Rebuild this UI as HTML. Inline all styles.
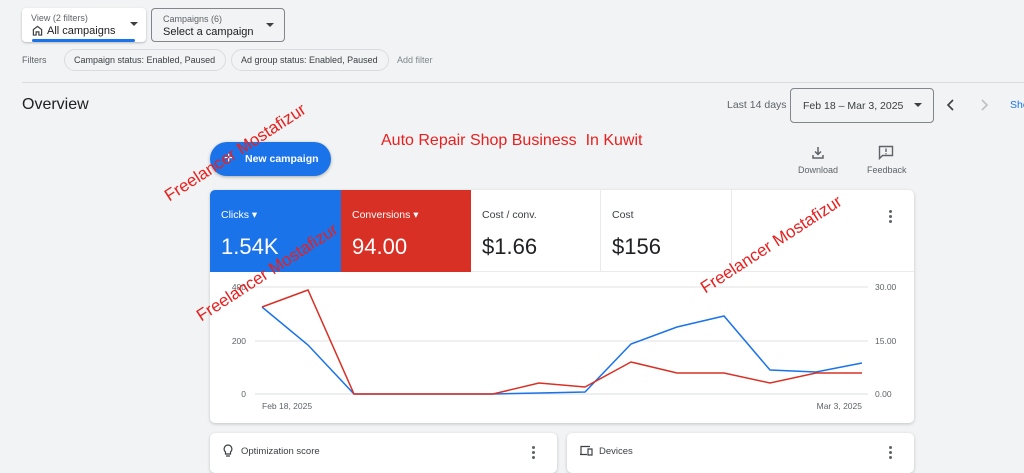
<!DOCTYPE html>
<html><head><meta charset="utf-8"><style>
body{margin:0;width:1024px;height:469px;background:#f1f3f4;font-family:"Liberation Sans",sans-serif;position:relative;overflow:hidden;color:#3c4043}
.abs{position:absolute;white-space:nowrap}
.sel{position:absolute;border-radius:4px;box-sizing:border-box}
.small{font-size:9px;color:#5f6368}
.chip{position:absolute;top:49px;height:22px;border:1px solid #dadce0;border-radius:12px;font-size:9px;color:#3c4043;line-height:20px;padding:0 9px;box-sizing:border-box;white-space:nowrap;overflow:hidden}
.wm{position:absolute;color:#e8201f;font-size:17px;transform-origin:left bottom;white-space:nowrap}
.tile{position:absolute;top:190px;height:82px;width:131px;box-sizing:border-box;padding:19px 0 0 11px}
.tile .l{font-size:10.5px}
.tile .v{font-size:22px;margin-top:13px}
.dots{position:absolute;width:3px}
.dots i{display:block;width:3px;height:3px;border-radius:50%;background:#5f6368;margin-bottom:2px}
</style></head><body>
<div class="sel" style="left:22px;top:8px;width:124px;height:34px;background:#fff;box-shadow:0 1px 2px rgba(0,0,0,.25)">
 <div class="small abs" style="left:9px;top:5px">View (2 filters)</div>
 <svg class="abs" style="left:10px;top:17px" width="11" height="11" viewBox="0 0 12 12"><path d="M1.5 11V5L6 1.5 10.5 5V11H7.5V7.5h-3V11Z" fill="none" stroke="#3c4043" stroke-width="1.3"/></svg>
 <div class="abs" style="left:25px;top:17px;font-size:11px;color:#202124">All campaigns</div>
 <div class="abs" style="left:108px;top:14px;border:4px solid transparent;border-top-color:#3c4043"></div>
 <div class="abs" style="left:10px;top:31px;width:103px;height:3px;background:#1a73e8;border-radius:2px"></div>
</div>
<div class="sel" style="left:151px;top:8px;width:134px;height:34px;border:1px solid #80868b">
 <div class="small abs" style="left:11px;top:5px">Campaigns (6)</div>
 <div class="abs" style="left:11px;top:17px;font-size:11px;color:#202124">Select a campaign</div>
 <div class="abs" style="left:114px;top:14px;border:4px solid transparent;border-top-color:#3c4043"></div>
</div>
<div class="small abs" style="left:22px;top:55px">Filters</div>
<div class="chip" style="left:64px;width:162px">Campaign status: Enabled, Paused</div>
<div class="chip" style="left:231px;width:158px">Ad group status: Enabled, Paused</div>
<div class="small abs" style="left:397px;top:55px;color:#80868b">Add filter</div>
<div class="abs" style="left:22px;top:82px;width:1002px;height:1px;background:#dadce0"></div>
<div class="abs" style="left:22px;top:96px;font-size:16px;color:#202124">Overview</div>
<div class="abs" style="left:727px;top:99px;font-size:10.5px;color:#5f6368">Last 14 days</div>
<div class="sel" style="left:790px;top:88px;width:144px;height:35px;border:1px solid #80868b">
 <div class="abs" style="left:12px;top:11px;font-size:10.5px;color:#3c4043">Feb 18 – Mar 3, 2025</div>
 <div class="abs" style="left:123px;top:14px;border:4px solid transparent;border-top-color:#3c4043"></div>
</div>
<svg class="abs" style="left:945px;top:98px" width="12" height="14"><path d="M8 2 3 7l5 5" fill="none" stroke="#3c4043" stroke-width="1.6"/></svg>
<svg class="abs" style="left:978px;top:98px" width="12" height="14"><path d="M4 2l5 5-5 5" fill="none" stroke="#bdc1c6" stroke-width="1.6"/></svg>
<div class="abs" style="left:1010px;top:99px;font-size:10.5px;color:#1a73e8">Show</div>
<div class="abs" style="left:210px;top:142px;width:121px;height:34px;background:#1a73e8;border-radius:17px;box-shadow:0 1px 3px rgba(0,0,0,.3);color:#fff;font-size:10.5px;font-weight:bold;line-height:34px"><span style="position:absolute;left:14px;font-size:16px;font-weight:normal">+</span><span style="position:absolute;left:35px">New campaign</span></div>
<svg class="abs" style="left:811px;top:146px" width="14" height="14" viewBox="0 0 14 14"><path d="M7 1v7M4 5.5 7 8.5 10 5.5M2 9v3h10V9" fill="none" stroke="#5f6368" stroke-width="1.5"/></svg>
<div class="small abs" style="left:798px;top:165px;font-size:9px;color:#5f6368">Download</div>
<svg class="abs" style="left:878px;top:145px" width="16" height="15" viewBox="0 0 16 15"><path d="M1.5 1.5h13v9h-10l-3 3z" fill="none" stroke="#5f6368" stroke-width="1.4"/><path d="M8 3.5v3.5M8 8.3v1" stroke="#5f6368" stroke-width="1.4"/></svg>
<div class="small abs" style="left:867px;top:165px;font-size:9px">Feedback</div>
<div class="abs" style="left:210px;top:190px;width:704px;height:233px;background:#fff;border-radius:5px;box-shadow:0 1px 3px rgba(0,0,0,.2);overflow:hidden"></div>
<div class="tile" style="left:210px;background:#1a73e8;color:#fff;border-top-left-radius:5px"><div class="l">Clicks ▾</div><div class="v">1.54K</div></div>
<div class="tile" style="left:341px;background:#d93025;color:#fff;width:130px"><div class="l">Conversions ▾</div><div class="v">94.00</div></div>
<div class="tile" style="left:471px;width:130px;border-right:1px solid #e8eaed;border-bottom:1px solid #e8eaed"><div class="l">Cost / conv.</div><div class="v" style="color:#202124">$1.66</div></div>
<div class="tile" style="left:601px;border-right:1px solid #e8eaed;border-bottom:1px solid #e8eaed"><div class="l">Cost</div><div class="v" style="color:#202124">$156</div></div>
<div class="abs" style="left:732px;top:271px;width:182px;height:1px;background:#e8eaed"></div>
<div class="dots" style="left:889px;top:210px"><i></i><i></i><i></i></div>
<svg class="abs" style="left:210px;top:272px" width="704" height="150">
<g font-family="Liberation Sans" font-size="8.5" fill="#5f6368">
<line x1="45" y1="15" x2="658" y2="15" stroke="#e0e0e0"/>
<line x1="45" y1="69" x2="658" y2="69" stroke="#e0e0e0"/>
<line x1="45" y1="122" x2="658" y2="122" stroke="#dadce0"/>
<text x="36" y="18" text-anchor="end">400</text><text x="36" y="72" text-anchor="end">200</text><text x="36" y="125" text-anchor="end">0</text>
<text x="665" y="18">30.00</text><text x="665" y="72">15.00</text><text x="665" y="125">0.00</text>
<text x="52" y="137">Feb 18, 2025</text><text x="652" y="137" text-anchor="end">Mar 3, 2025</text>
</g>
<g transform="translate(-210,-272)" fill="none" stroke-width="1.5">
<polyline stroke="#1a73e8" points="262,307 308,345 354,394 400,394 447,394 493,394 539,393 585,392 631,344 677,327 724,316 770,370 816,372 862,363"/>
<polyline stroke="#d93025" points="262,307 308,290 354,394 400,394 447,394 493,394 539,383 585,387 631,362 677,373 724,373 770,383 816,373 862,373"/>
</g></svg>
<div class="abs" style="left:210px;top:433px;width:347px;height:40px;background:#fff;border-radius:5px;box-shadow:0 1px 3px rgba(0,0,0,.2)"></div>
<svg class="abs" style="left:223px;top:444px" width="10" height="13"><path d="M5 1a4 4 0 0 0-2.5 7V10h5V8A4 4 0 0 0 5 1zM3 12h4" fill="none" stroke="#3c4043" stroke-width="1.2"/></svg>
<div class="abs" style="left:241px;top:446px;font-size:9.5px">Optimization score</div>
<div class="dots" style="left:532px;top:446px"><i></i><i></i><i></i></div>
<div class="abs" style="left:567px;top:433px;width:347px;height:40px;background:#fff;border-radius:5px;box-shadow:0 1px 3px rgba(0,0,0,.2)"></div>
<svg class="abs" style="left:579px;top:445px" width="14" height="11"><path d="M2 9V1.5h9M1 9.5h7M9 4h4v6H9z" fill="none" stroke="#3c4043" stroke-width="1.2"/></svg>
<div class="abs" style="left:599px;top:446px;font-size:9.5px">Devices</div>
<div class="dots" style="left:889px;top:446px"><i></i><i></i><i></i></div>
<div class="abs" style="left:381px;top:132px;font-size:16px;color:#e8201f">Auto Repair Shop Business&nbsp;&nbsp;In Kuwit</div>
<div class="wm" style="left:172px;top:186px;transform:rotate(-33deg)">Freelancer Mostafizur</div>
<div class="wm" style="left:204px;top:306px;transform:rotate(-33deg)">Freelancer Mostafizur</div>
<div class="wm" style="left:708px;top:278px;transform:rotate(-33deg)">Freelancer Mostafizur</div>
</body></html>
